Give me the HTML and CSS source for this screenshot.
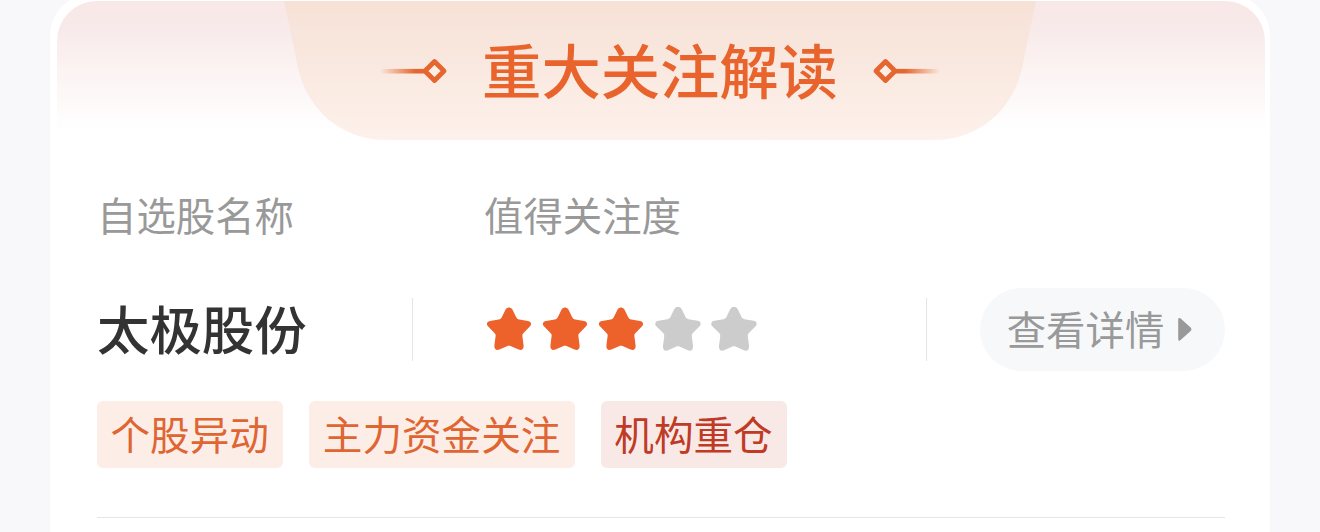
FILE: index.html
```html
<!DOCTYPE html>
<html lang="zh-CN">
  <head>
    <meta charset="utf-8">
    <meta name="viewport" content="width=device-width, initial-scale=1.0">
    <title>重大关注解读</title>
    <link rel="stylesheet" href="styles.css">
  </head>
  <body>
    <!-- shapes used more than once -->
    <svg class="defs" width="0" height="0">
      <defs>
        <linearGradient id="tail" gradientUnits="userSpaceOnUse" x1="0" y1="0" x2="44" y2="0">
          <stop offset="0" stop-color="#e5662f" stop-opacity="0"/>
          <stop offset="0.8" stop-color="#e5662f"/>
        </linearGradient>
        <linearGradient id="tab" x1="0" y1="0" x2="0" y2="1">
          <stop offset="0" stop-color="#f6e1d6"/>
          <stop offset="1" stop-color="#fdf1eb"/>
        </linearGradient>
        <symbol id="ornament" viewBox="0 0 68 26">
          <rect x="0" y="10.9" width="46" height="4.6" fill="url(#tail)"/>
          <path d="M54.5 3.5L64 13L54.5 22.5L45 13Z" fill="#fdeee6" stroke="#e5662f" stroke-width="4.8" stroke-linejoin="round"/>
        </symbol>
        <symbol id="star" viewBox="0 0 46 46">
          <path d="M23 .5C24.8 .5 26 1.6 26.8 3.2L30.2 10.2C30.8 11.5 31.8 12.2 33.2 12.5L42 14C45.3 14.6 46 17.5 43.8 19.6L37.5 26C36.5 27 36.2 28 36.4 29.3L37.6 38.5C38 42.2 35.5 44 32.6 42.6L25 39.2C23.7 38.6 22.3 38.6 21 39.2L13.4 42.6C10.5 44 8 42.2 8.4 38.5L9.6 29.3C9.8 28 9.5 27 8.5 26L2.2 19.6C0 17.5 .7 14.6 4 14L12.8 12.5C14.2 12.2 15.2 11.5 15.8 10.2L19.2 3.2C20 1.6 21.2 .5 23 .5Z" fill="currentColor"/>
        </symbol>
      </defs>
    </svg>

    <div class="card">
      <div class="header">
        <svg class="header-tab" width="752" height="139" viewBox="0 0 752 139">
          <path d="M0 0H752L738 67C729 109 694 139 650 139H102C58 139 23 109 14 67Z" fill="url(#tab)"/>
        </svg>
        <div class="title">
          <svg class="ornament" width="68" height="26"><use href="#ornament"/></svg>
          <h1>重大关注解读</h1>
          <svg class="ornament flip" width="68" height="26"><use href="#ornament"/></svg>
        </div>
      </div>

      <div class="content">
        <div class="labels">
          <span>自选股名称</span>
          <span>值得关注度</span>
        </div>
        <div class="stock">
          <h2>太极股份</h2>
          <div class="stars">
            <svg class="star on"><use href="#star"/></svg>
            <svg class="star on"><use href="#star"/></svg>
            <svg class="star on"><use href="#star"/></svg>
            <svg class="star"><use href="#star"/></svg>
            <svg class="star"><use href="#star"/></svg>
          </div>
          <div class="action">
            <a class="detail-btn">
              <span>查看详情</span>
              <svg width="14" height="26" viewBox="0 0 14 26">
                <path d="M1.5 2.2L12 11.6V12.9L1.5 22.3Z" fill="#999" stroke="#999" stroke-width="2.6" stroke-linejoin="round"/>
              </svg>
            </a>
          </div>
        </div>
        <div class="tags">
          <span class="tag">个股异动</span>
          <span class="tag">主力资金关注</span>
          <span class="tag red">机构重仓</span>
        </div>
      </div>
    </div>
  </body>
</html>
```

FILE: styles.css
```css
body {
    margin: 0;
    height: 532px;
    overflow: hidden;
    background-color: #f8f8fb;
    font-family: "Noto Sans CJK SC", sans-serif;
}

h1,
h2 {
    margin: 0;
    font-weight: 500;
}

.defs {
    position: absolute;
}

.card {
    box-sizing: border-box;
    width: 1220px;
    height: 538px;
    margin: -6px 50px 0;
    padding: 7px 5px 0 7px;
    border-radius: 42px 42px 0 0;
    background-color: #fff;
}

.header {
    position: relative;
    height: 139px;
    border-radius: 40px 40px 0 0;
    background: linear-gradient(#f8e8e7 0, #f8eaea 30px, #fcf3f3 70px, #fff 130px);
}

.header-tab {
    position: absolute;
    left: 227px;
    top: 0;
}

.title {
    position: relative;
    display: flex;
    justify-content: center;
    align-items: center;
    height: 139px;
    gap: 34px;
    padding-right: 2px;
}

.title h1 {
    font-size: 59.3px;
    line-height: 135px;
    height: 139px;
    color: #e9642d;
}

.flip {
    transform: scaleX(-1);
}

.content {
    margin: 0 40px;
    height: 377px;
    border-bottom: 1px solid #e5e5e5;
}

.labels {
    display: grid;
    grid-template-columns: 387px 1fr;
    padding-top: 44px;
    font-size: 39.4px;
    line-height: 60px;
    color: #999;
}

.stock {
    display: grid;
    grid-template-columns: 315px 1fr 299px;
    align-items: center;
    height: 83px;
    margin-top: 44px;
}

.stock h2 {
    font-size: 52.4px;
    line-height: 79px;
    height: 83px;
    color: #333;
}

.stars {
    display: flex;
    align-items: center;
    gap: 10.2px;
    height: 63px;
    padding-left: 73px;
    border-left: 1px solid #e5e5e5;
}

.star {
    width: 46px;
    height: 46px;
    color: #ccc;
    overflow: visible;
    transform: scale(1.03);
}

.star.on {
    color: #ed622a;
    transform: none;
}

.action {
    display: flex;
    justify-content: flex-end;
    align-items: center;
    height: 63px;
    border-left: 1px solid #e5e5e5;
}

.detail-btn {
    display: flex;
    align-items: center;
    justify-content: center;
    box-sizing: border-box;
    gap: 14px;
    width: 245px;
    height: 83px;
    padding-right: 6px;
    border-radius: 42px;
    background-color: #f7f8fa;
    font-size: 39.4px;
    color: #999;
}

.detail-btn span {
    height: 83px;
    line-height: 79px;
}

.tags {
    display: flex;
    gap: 26px;
    margin-top: 30px;
}

.tag {
    height: 67px;
    padding: 0 14.5px 0 13.5px;
    border-radius: 6px;
    background-color: #fceee7;
    font-size: 39.6px;
    line-height: 63px;
    color: #df6532;
}

.tag.red {
    background-color: #f8e9e7;
    color: #bf3b25;
}
```
